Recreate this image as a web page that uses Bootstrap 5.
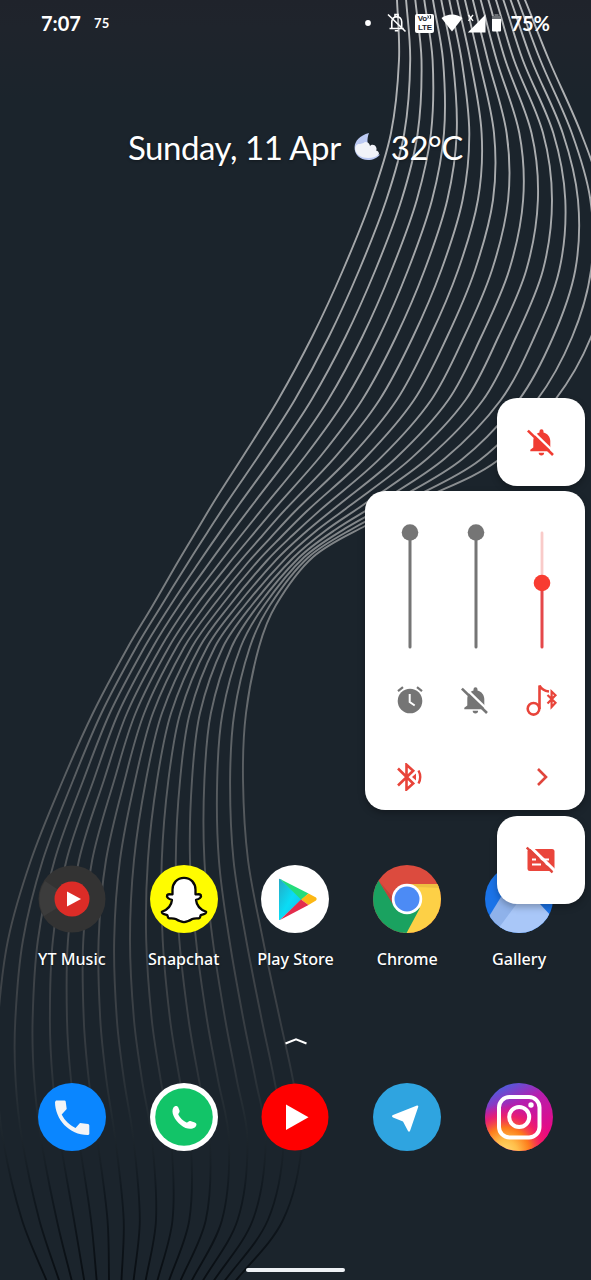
<!DOCTYPE html>
<html lang="en">
<head>
<meta charset="utf-8">
<meta name="viewport" content="width=device-width, initial-scale=1">
<title>Home screen</title>
<link href="https://cdn.jsdelivr.net/npm/bootstrap@5.3.0/dist/css/bootstrap.min.css" rel="stylesheet">
<style>
body{background:#1b242c;font-family:Lato,"Open Sans",sans-serif;overflow:hidden}
svg{display:block;flex:none}
.phone{width:591px;height:1280px;background:linear-gradient(#1f232b 0,#1f242c 28px,#1b242c 100px)}
.wall{inset:0}
.status{height:46px;padding:0 41px 0 41px;font-weight:700;font-size:20px;line-height:20px}
.t-small{font-size:13px;margin-left:13px;letter-spacing:.3px}
.volte{width:19px;height:19px;background:#fff;color:#1b242c;border-radius:2px;font:700 8px/9px "Liberation Sans",sans-serif;padding-top:.5px}
.volte span{display:block;height:9px;text-align:center;letter-spacing:-.2px}
.volte div{height:9px}
.weather{margin-top:78px;height:46px;padding-left:128px;font-size:33px;letter-spacing:-.45px;line-height:46px;text-shadow:0 1px 3px rgba(0,0,0,.35);white-space:nowrap}
.apps{padding:0 16px}
.page1{margin-top:695px;height:109px}
.app-name{font-family:"Noto Sans",sans-serif;font-weight:500;font-size:16.1px;line-height:22px;margin-top:15px;text-shadow:0 1px 2px rgba(0,0,0,.5);white-space:nowrap}
.app{flex:1 1 0}
.up{margin-top:62px;height:10px}
.dock{margin-top:36.5px}
.home-bar{width:99px;height:4px;border-radius:2px;background:#eef1f5;margin-bottom:8px}
.volume{right:6px;top:398px;width:220px}
.tile,.panel{background:#fff;box-shadow:0 3px 7px rgba(0,0,0,.28)}
.tile{width:88px;height:88px;border-radius:20px}
.panel{height:319px;border-radius:20px;margin:5px 0 6px;padding:32px 10.500px 0 11.500px}
.slot{width:66px;display:flex;justify-content:center}
</style>
<script src="https://cdn.jsdelivr.net/npm/bootstrap@5.3.0/dist/js/bootstrap.bundle.min.js"></script>
</head>
<body>
<svg width="0" height="0" class="position-absolute">
<defs>
<symbol id="belloff" viewBox="0 0 27 27">
<path fill="currentColor" d="M12.500 3.500V2.200a2 2 0 0 1 4 0V3.500C20.600 4.500 23.300 8 23.300 12V18.500l-.5 3.700H3.300V20.800L6.300 18.500V12.500C6.300 8 8.500 4.500 12.500 3.500zM11.700 23.800h5.400a2.700 2.700 0 0 1-5.400 0z"/>
<path stroke="#fff" stroke-width="2.400" d="M3-.2 28.200 24.300"/>
<path stroke="currentColor" stroke-width="2.600" d="M.9 1.600 26 26"/>
</symbol>
</defs>
</svg>
<main class="phone position-relative d-flex flex-column text-white overflow-hidden">
<svg class="wall position-absolute" width="591" height="1280" fill="none">
<defs><linearGradient id="fade" gradientUnits="userSpaceOnUse" x1="0" y1="0" x2="0" y2="1280">
<stop offset="0" stop-color="#b4b6b8"/><stop offset=".3" stop-color="#9b9ea1"/><stop offset=".44" stop-color="#7d8184"/><stop offset=".6" stop-color="#5a5f63"/><stop offset=".72" stop-color="#474b4f"/><stop offset=".82" stop-color="#343a40"/><stop offset=".875" stop-color="#202930"/><stop offset=".93" stop-color="#111920"/><stop offset="1" stop-color="#090e13"/></linearGradient></defs>
<g id="waves" stroke="url(#fade)" stroke-width="1.9"></g>
</svg>

<header class="status position-relative d-flex align-items-center">
<span>7:07</span><span class="t-small">75</span>
<svg class="ms-auto" width="6" height="6"><circle cx="3" cy="3" r="2.900" fill="#fff"/></svg>
<svg width="20" height="20" viewBox="0 0 20 20" fill="none" stroke="#fff" stroke-width="1.600" style="margin-left:16px"><path d="M4.800 15.300V9C4.800 6 6.500 4 9.500 3.600c3.200 0 5.200 2.300 5.200 5.400v6.300M2.500 15.500h14.300M1 1.500l17.500 17M8 3.500V1.500h3v2M7.800 17.700h3.500"/></svg>
<div class="volte" style="margin-left:8px"><div class="d-flex justify-content-center"><span>Vo</span><svg width="5" height="9" viewBox="0 0 5 9" fill="none" stroke="#1b242c"><path d="M.8 1.500q1.200 1.500 0 3M3 1q1.600 2 0 4"/></svg></div><span>LTE</span></div>
<svg width="22" height="18" viewBox="0 0 22 18" style="margin-left:7px"><path d="M.5 4C6.500-.8 15.500-.8 21.500 4L11 17.500z" fill="#fff"/></svg>
<svg width="19" height="19" viewBox="0 0 19 19" style="margin-left:4px"><path d="M18.500.5v18H.8z" fill="#fff"/><path d="M1.500.8l4.500 6M6 .8l-4.500 6" stroke="#fff" stroke-width="1.400"/></svg>
<svg width="9" height="18" viewBox="0 0 9 18" style="margin-left:6px"><path d="M2.500 0h4v2H9v3H0V2h2.500z" fill="#6c7075"/><path d="M0 5h9v11.500a1 1 0 0 1-1 1H1a1 1 0 0 1-1-1z" fill="#fff"/></svg>
<span style="margin-left:9px">75%</span>
</header>

<section class="weather position-relative d-flex align-items-center">
<span>Sunday, 11 Apr</span>
<svg width="27" height="28" viewBox="0 0 27 28" style="margin-left:13px"><path d="M15 0C5.500 2.500 1 8 .6 14 0 21 6 27 14 27c5 0 9.500-2 12-5.500-3.500.5-7-1-9.500-4C13 13 12.500 6 15 0z" fill="#bccaf3"/><path d="M9.500 10c2-2 6-.5 6.500 3 1.500-2 5-1.500 6 1 1 2 .5 3 0 3.500 1.500 0 3 1.500 3 3.500-2 2.500-6 4-11 4C7.500 25 2 21.500 1.300 16.500.8 13 3 10.500 6 11z" fill="#f1f3f9"/></svg>
<span style="margin-left:10px">32°C</span>
</section>

<section class="apps page1 position-relative d-flex">
<div class="app d-flex flex-column align-items-center">
<svg width="68" height="68" viewBox="0 0 68 68"><circle cx="34" cy="34" r="33.500" fill="#333"/><path d="M34 34L7 16A33 33 0 0 0 6 51z" fill="#3c3c3c"/><circle cx="34" cy="34" r="17.500" fill="#dc2c27"/><path d="M29 26.500v15L43 34z" fill="#fff"/></svg>
<div class="app-name">YT Music</div></div>
<div class="app d-flex flex-column align-items-center">
<svg width="68" height="68" viewBox="0 0 68 68"><circle cx="34" cy="34" r="34" fill="#fffc00"/><path d="M34 12.800c-7 0-11.500 5.500-11.500 12v4.500c-1.500.3-4-.8-5.300.8-1 2 1.500 4.200 4.800 4.700-.5 5.500-4.300 9.700-10.100 12-.5 2.200 3 2.500 5.300 3.300.8 1.500.5 3 2 3.300 2.500-.2 4.500-.4 6.500.7 2.500 1.500 5 3 8.300 3s5.800-1.500 8.300-3c2-1.100 4-.9 6.500-.7 1.500-.3 1.200-1.800 2-3.300 2.300-.8 5.800-1.100 5.300-3.300-5.800-2.300-9.600-6.500-10.100-12 3.300-.5 5.800-2.700 4.800-4.700-1.300-1.600-3.800-.5-5.300-.8v-4.500c0-6.500-4.500-12-11.500-12z" fill="#fff" stroke="#080808" stroke-width="2.300" stroke-linejoin="round"/></svg>
<div class="app-name">Snapchat</div></div>
<div class="app d-flex flex-column align-items-center">
<svg width="68" height="68" viewBox="0 0 68 68"><defs><linearGradient id="pb" x1="0" y1="0" x2="1" y2="1"><stop offset="0" stop-color="#25a9c4"/><stop offset=".5" stop-color="#0adcf5"/><stop offset="1" stop-color="#16b7f0"/></linearGradient></defs><circle cx="34" cy="34" r="34" fill="#fff"/><path d="M18 14.500v40q0 1 1.500 0L41 34 19.500 14.200q-1.500-.8-1.500.3z" fill="url(#pb)"/><path d="M19 14l28.500 14.500-7 6.500z" fill="#24dc7c"/><path d="M47.500 28.500l7.500 4q1.500 1.500 0 3L47.500 40 40 34.500z" fill="#fcb714"/><path d="M40 34.500l7.500 5.500L19 55z" fill="#e32c4c"/></svg>
<div class="app-name">Play Store</div></div>
<div class="app d-flex flex-column align-items-center">
<svg width="68" height="68" viewBox="0 0 68 68"><defs><clipPath id="cc"><circle cx="34" cy="34" r="34"/></clipPath></defs><g clip-path="url(#cc)"><path d="M0 0h68v68H0z" fill="#dc4b3e"/><path d="M34 19h34v49H30L47 41z" fill="#fdd046"/><path d="M0 68V6.500L21 41 34 49l13-6-14 26z" fill="#1aa260"/><path d="M34 19h34v4L44 22z" fill="#dba83c" opacity=".45"/><path d="M6.500 16.500L20.500 41l-1-9z" fill="#a33b32" opacity=".45"/></g><circle cx="34" cy="34" r="15.200" fill="#fff"/><circle cx="34" cy="34" r="12.500" fill="#4c8bf5"/></svg>
<div class="app-name">Chrome</div></div>
<div class="app d-flex flex-column align-items-center">
<svg width="68" height="68" viewBox="0 0 68 68"><g clip-path="url(#cc)"><path d="M0 0h68v68H0z" fill="#1a73e8"/><path d="M0 58L27 14l17 18-24 36H0z" fill="#8fb2ea"/><path d="M13 64L36 33l6-8 26 28v15H13z" fill="#a9c7f8"/></g></svg>
<div class="app-name">Gallery</div></div>
</section>

<div class="up position-relative d-flex justify-content-center"><svg width="24" height="10" viewBox="0 0 24 10"><path d="M1.500 7.500L12 3.300 22.500 7.500" fill="none" stroke="#fff" stroke-width="2"/></svg></div>

<section class="apps dock position-relative d-flex">
<div class="app d-flex justify-content-center"><svg width="68" height="68" viewBox="0 0 68 68"><circle cx="34" cy="34" r="34" fill="#0a86ff"/><path d="M18 17.500h8.500q1 0 1.200 1l1 7.500-5 5.500C27 38 31.500 42 37.500 45l4.500-5 8 1q1.300.2 1.300 1.500v8.500q-.3 1-1.500 1C31 52 17 36 17 19z" fill="#f3f4f6"/></svg></div>
<div class="app d-flex justify-content-center"><svg width="68" height="68" viewBox="0 0 68 68"><circle cx="34" cy="34" r="34" fill="#fff"/><circle cx="34" cy="34" r="28.800" fill="#12c468"/><path d="M23.500 24.500c1.300-2 4-2 4.800 0l1.300 3.300c.4 1.700-1.700 2.700-1.200 4C30 35 33 38 36.500 39.500c1.500.5 2-1.800 3.800-1.400l4.500 1.500c2.700 1 1.700 3.700 0 4.900-3.800 2.500-9 1.500-14-2.500C24.500 37 20.500 29 23.500 24.500z" fill="#fff"/></svg></div>
<div class="app d-flex justify-content-center"><svg width="68" height="68" viewBox="0 0 68 68"><circle cx="34" cy="34" r="33.500" fill="#f00"/><path d="M25 21.500v25.500L47.500 34.200z" fill="#fff"/></svg></div>
<div class="app d-flex justify-content-center"><svg width="68" height="68" viewBox="0 0 68 68"><circle cx="34" cy="34" r="34" fill="#2fa4e0"/><path d="M44 22.500q1.800-.3 1.200 1.500L37 48q-1 1.500-2 0L30 38.500 20 34.500q-2-1.300 0-2.500z" fill="#fff"/></svg></div>
<div class="app d-flex justify-content-center"><svg width="68" height="68" viewBox="0 0 68 68"><defs><linearGradient id="i1" x1=".3" y1="0" x2=".75" y2=".9"><stop offset="0" stop-color="#4b5fe0"/><stop offset=".35" stop-color="#b31fb0"/><stop offset="1" stop-color="#f0057c"/></linearGradient><radialGradient id="i2" cx=".3" cy="1.020" r=".72"><stop offset="0" stop-color="#ffdc72"/><stop offset=".25" stop-color="#ffbe4a"/><stop offset=".5" stop-color="#fd7c1c"/><stop offset=".75" stop-color="#f8225c" stop-opacity=".75"/><stop offset="1" stop-color="#f0107c" stop-opacity="0"/></radialGradient></defs><circle cx="34" cy="34" r="34" fill="url(#i1)"/><circle cx="34" cy="34" r="34" fill="url(#i2)"/><g fill="none" stroke="#fff" stroke-width="4"><rect x="14" y="14" width="40.500" height="40.500" rx="10.500"/><circle cx="34.200" cy="34" r="10"/></g><circle cx="46" cy="22" r="2.700" fill="#fff"/></svg></div>
</section>
<div class="home-bar position-relative mt-auto mx-auto"></div>

<aside class="volume position-absolute">
<div class="tile ms-auto d-flex align-items-center justify-content-center" style="color:#f03c32"><svg width="27" height="27" style="margin-right:2px"><use href="#belloff"/></svg></div>
<div class="panel">
<div class="d-flex">
<div class="slot"><svg width="18" height="126"><path d="M9 10v114" stroke="#757575" stroke-width="3" stroke-linecap="round"/><circle cx="9" cy="9.500" r="8.300" fill="#757575"/></svg></div>
<div class="slot"><svg width="18" height="126"><path d="M9 10v114" stroke="#757575" stroke-width="3" stroke-linecap="round"/><circle cx="9" cy="9.500" r="8.300" fill="#757575"/></svg></div>
<div class="slot"><svg width="18" height="126"><path d="M9 10v50" stroke="#f9cbc9" stroke-width="2.800" stroke-linecap="round"/><path d="M9 60v64" stroke="#e5484a" stroke-width="3" stroke-linecap="round"/><circle cx="9" cy="60" r="8.300" fill="#f83c31"/></svg></div>
</div>
<div class="d-flex align-items-center" style="height:36px;margin-top:33px">
<div class="slot"><svg width="28" height="28" viewBox="0 0 28 28"><circle cx="14" cy="15" r="12.300" fill="#757575"/><path d="M2 5.200l5-4M26 5.200l-5-4" stroke="#757575" stroke-width="2.200"/><path d="M13.700 8v8l5 3.500" fill="none" stroke="#fff" stroke-width="2"/></svg></div>
<div class="slot" style="color:#757575"><svg width="27" height="27" style="margin-right:2px"><use href="#belloff"/></svg></div>
<div class="slot"><svg width="32" height="33" viewBox="0 0 32 33" fill="none" stroke="#e8443a" stroke-width="2.600" style="margin-bottom:2px"><circle cx="7.500" cy="25.800" r="5.800"/><path d="M13.500 26V2.500C15 5.500 18.500 8 23 8.500"/><path d="M21.500 12l8 7.800-3.900 4.200V8.500l3.900 3.700-8 8.300" stroke-width="2.200"/></svg></div>
</div>
<div class="d-flex align-items-center" style="height:32px;margin-top:43px">
<div class="slot"><svg width="27" height="28" viewBox="0 0 27 28" fill="none" stroke="#e8443a" stroke-width="2.600"><path d="M2 5.500l15.200 15-6.700 6V1.700l6.700 6L2 22.500"/><path d="M22.500 7.500Q26 14 22.500 20.500" stroke-width="2.400"/><path d="M16 14l4-3.500v7z" fill="#e8443a" stroke="none"/></svg></div>
<div class="slot"></div>
<div class="slot"><svg width="12" height="20" viewBox="0 0 12 20" fill="none" stroke="#e0453c" stroke-width="2.600"><path d="M2 2l8 8-8 8"/></svg></div>
</div>
</div>
<div class="tile ms-auto d-flex align-items-center justify-content-center"><svg width="29" height="28" viewBox="0 0 29 28" style="margin-right:1px"><rect x="1.500" y="3" width="27" height="22" rx="2.500" fill="#ea453b"/><path d="M6 13.500h4M13 13.500h10M6 18.500h9M18.500 18.500h4.500" stroke="#fff" stroke-width="2"/><path d="M3-.5L29 24.800" stroke="#fff" stroke-width="3"/><path d="M.8 1.500L26.500 26.500" stroke="#e0453c" stroke-width="2.400"/></svg></div>
</aside>
</main>
<script>
// Each station lists the position of ribbon strands 1, 5, 9, 13 and 17; the others are interpolated.
const Y = (y, ...xs) => xs.map(x => [x, y]);
const stations = [
  Y(-8,396,432,463,492,521), Y(0,397,433,465,496,525), Y(60,399,443,479,514,549), Y(133,391,444,494,543,581),
  Y(200,371,432,493,552,603), Y(270,343,408,475,543,607), Y(337,312,379,447,516,591), Y(400,278,345,414,483,555),
  [[247,450],[306,455],[365,458],[428,458],[497,461]],
  [[215,500],[263,508],[307,511],[363,505],[420,500]],
  [[197,530],[239,538],[281,537],[325,531],[365,526]],
  [[179,560],[218,565],[257,562],[293,558],[313,557]],
  Y(605,153,188,222,252,276), Y(647,128,161,192,223,259), Y(713,93,127,162,200,246),
  Y(780,63,104,146,192,243), Y(860,31,79,134,190,248), Y(940,8,68,130,196,263), Y(1020,-2,67,134,207,280),
  Y(1080,-3,71,142,218,293), Y(1140,3,79,152,229,302), Y(1220,22,91,156,222,283), Y(1284,48,97,145,190,233)
];
function strand(points, i) {
  const k = Math.min(3, Math.floor(i / 4)), t = i / 4 - k;
  return [0, 1].map(a => {
    const b = points[k][a], c = points[k + 1][a];
    const p = k > 0 ? points[k - 1][a] : 2 * b - c, n = k < 3 ? points[k + 2][a] : 2 * c - b;
    return .5 * (2*b + (c-p)*t + (2*p-5*b+4*c-n)*t*t + (3*b-p-3*c+n)*t*t*t);
  });
}
let paths = '';
for (let i = 0; i < 17; i++) {
  const p = stations.map(s => strand(s, i));
  let d = 'M' + p[0];
  for (let j = 0; j < p.length - 1; j++) {
    const a = p[j], b = p[j + 1], o = p[j - 1] || a, n = p[j + 2] || b;
    const len = Math.hypot(b[0]-a[0], b[1]-a[1]);
    const s1 = len / (len + Math.hypot(a[0]-o[0], a[1]-o[1])) / 3, s2 = len / (len + Math.hypot(n[0]-b[0], n[1]-b[1])) / 3;
    d += 'C' + [a[0]+(b[0]-o[0])*s1, a[1]+(b[1]-o[1])*s1, b[0]-(n[0]-a[0])*s2, b[1]-(n[1]-a[1])*s2, b[0], b[1]].map(v => v.toFixed(1));
  }
  paths += '<path d="' + d + '"/>';
}
document.getElementById('waves').innerHTML = paths;
</script>
</body>
</html>
